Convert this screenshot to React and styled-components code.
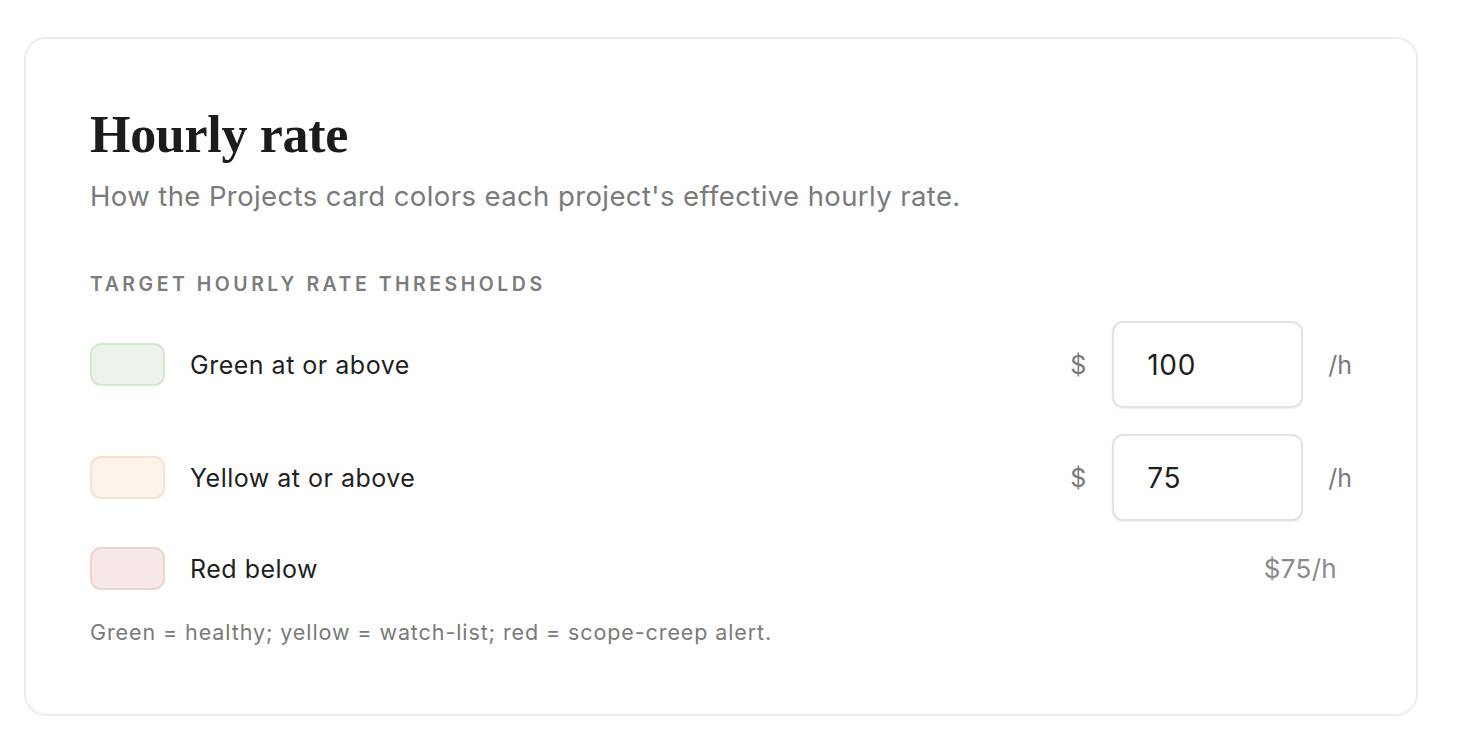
import React from 'react';
import styled, { createGlobalStyle } from 'styled-components';

const GlobalStyle = createGlobalStyle`
  html, body {
    margin: 0;
    padding: 0;
    background: #ffffff;
  }
  body {
    font-family: Inter, 'Noto Sans', sans-serif;
    -webkit-font-smoothing: antialiased;
  }
`;

const Page = styled.div`
  padding: 37px 40px 40px 24px;
`;

const Card = styled.section`
  box-sizing: border-box;
  width: 1394px;
  height: 679px;
  border: 2px solid #ececec;
  border-radius: 22px;
  padding: 64px 64px 0 64px;
  background: #fff;
`;

const Title = styled.h1`
  margin: 0;
  font-family: 'Liberation Serif', 'DejaVu Serif', serif;
  font-weight: 700;
  font-size: 52px;
  line-height: 64px;
  letter-spacing: -0.3px;
  color: #1c1c1c;
`;

const Subtitle = styled.p`
  margin: 12px 0 0;
  font-size: 27.5px;
  line-height: 34px;
  letter-spacing: 0.4px;
  color: #7a7a7a;
`;

const SectionLabel = styled.div`
  margin-top: 60px;
  font-size: 19.5px;
  line-height: 22px;
  font-weight: 600;
  letter-spacing: 3.5px;
  text-transform: uppercase;
  color: #7c7c7c;
`;

const Rows = styled.div`
  margin-top: 26px;
  display: flex;
  flex-direction: column;
  gap: 26px;
`;

const Row = styled.div`
  display: flex;
  align-items: center;
  min-height: 42px;
`;

const Swatch = styled.div`
  box-sizing: border-box;
  width: 75px;
  height: 43px;
  border-radius: 11px;
  border: 2px solid ${(p) => p.$border};
  background: ${(p) => p.$bg};
  flex: none;
`;

const Label = styled.div`
  margin-left: 25px;
  flex: 1;
  font-size: 25px;
  letter-spacing: 0.5px;
  color: #1f1f1f;
`;

const Currency = styled.span`
  font-size: 25px;
  color: #7a7a7a;
  margin-right: 26px;
`;

const Input = styled.input`
  box-sizing: border-box;
  width: 191px;
  height: 87px;
  border: 2px solid #e3e3e3;
  border-radius: 11px;
  box-shadow: 0 1px 2px rgba(0, 0, 0, 0.06);
  padding: 0 0 0 33px;
  font-family: Inter, 'Noto Sans', sans-serif;
  font-size: 28px;
  letter-spacing: 0.7px;
  color: #1f1f1f;
  background: #fff;
  outline: none;
`;

const Unit = styled.span`
  font-size: 25px;
  color: #7a7a7a;
  margin-left: 25px;
`;

const Static = styled.span`
  font-size: 26px;
  letter-spacing: 0.3px;
  color: #8a8a8a;
  margin-right: 15px;
`;

const Footnote = styled.p`
  margin: 29px 0 0;
  font-size: 21.5px;
  line-height: 26px;
  letter-spacing: 0.9px;
  color: #7a7a7a;
`;

const rows = [
  { label: 'Green at or above', bg: '#ebf3ea', border: '#d6e7d4', value: '100' },
  { label: 'Yellow at or above', bg: '#fdf3ea', border: '#f6e2d0', value: '75' },
  { label: 'Red below', bg: '#f6e8e7', border: '#ecd3d0', fixed: '$75/h' },
];

export default function App() {
  return (
    <>
      <GlobalStyle />
      <Page>
        <Card>
          <Title>Hourly rate</Title>
          <Subtitle>How the Projects card colors each project's effective hourly rate.</Subtitle>
          <SectionLabel>Target hourly rate thresholds</SectionLabel>
          <Rows>
            {rows.map((r) => (
              <Row key={r.label}>
                <Swatch $bg={r.bg} $border={r.border} />
                <Label>{r.label}</Label>
                {r.fixed ? (
                  <Static>{r.fixed}</Static>
                ) : (
                  <>
                    <Currency>$</Currency>
                    <Input defaultValue={r.value} />
                    <Unit>/h</Unit>
                  </>
                )}
              </Row>
            ))}
          </Rows>
          <Footnote>Green = healthy; yellow = watch-list; red = scope-creep alert.</Footnote>
        </Card>
      </Page>
    </>
  );
}
